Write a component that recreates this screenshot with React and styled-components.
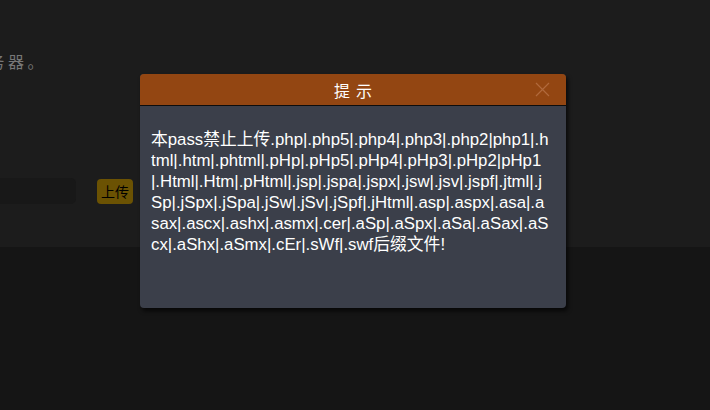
import React from 'react';
import styled, { createGlobalStyle } from 'styled-components';

const GlobalStyle = createGlobalStyle`
  html, body {
    margin: 0;
    padding: 0;
    background: #151515;
    font-family: "Liberation Sans", Arial, "Noto Sans CJK SC", sans-serif;
  }
  #root {
    min-height: 410px;
  }
`;

const Page = styled.div`
  position: relative;
  width: 710px;
  height: 410px;
  overflow: hidden;
  background: #151515;
`;

const Top = styled.div`
  height: 247px;
  background: #1c1c1c;
  display: flex;
  flex-direction: column;
  overflow: hidden;
`;

const Notice = styled.p`
  margin: 49px 0 0 -31px;
  white-space: nowrap;
  font-size: 16px;
  letter-spacing: 3.5px;
  color: #777;
  font-family: "Noto Sans CJK SC", sans-serif;
`;

const UploadRow = styled.div`
  display: flex;
  align-items: center;
  gap: 21px;
  margin-top: 105px;
`;

const FileInput = styled.div`
  width: 80px;
  height: 26px;
  margin-left: -4px;
  border-radius: 0 5px 5px 0;
  background: #181818;
`;

const UploadButton = styled.button`
  height: 25px;
  padding: 0 4px;
  border: none;
  border-radius: 4px;
  background: #6b5203;
  color: #000;
  font-size: 14px;
  font-family: "Noto Sans CJK SC", sans-serif;
  line-height: 25px;
`;

const Dialog = styled.div`
  position: absolute;
  left: 140px;
  top: 74px;
  width: 426px;
  height: 234px;
  border-radius: 4px;
  background: #3b3f4a;
  box-shadow: 2px 3px 4px rgba(0, 0, 0, 0.7);
  display: flex;
  flex-direction: column;
  overflow: hidden;
`;

const Header = styled.div`
  position: relative;
  height: 31px;
  flex: none;
  background: #934612;
  border-bottom: 1px solid #0d0d0d;
  display: flex;
  align-items: center;
  justify-content: center;
  color: #fff;
  font-size: 16px;
  letter-spacing: 6px;
  padding-left: 6px;
  font-family: "Noto Sans CJK SC", sans-serif;
`;

const Close = styled.svg`
  position: absolute;
  right: 16px;
  top: 8px;
`;

const Body = styled.div`
  padding: 23px 8px 0 11px;
  color: #fff;
  font-size: 16.8px;
  line-height: 21px;
  font-family: "Liberation Sans", Arial, "Noto Sans CJK SC", sans-serif;
`;

const Line = styled.div`
  white-space: nowrap;
`;

const lines = [
  '本pass禁止上传.php|.php5|.php4|.php3|.php2|php1|.h',
  'tml|.htm|.phtml|.pHp|.pHp5|.pHp4|.pHp3|.pHp2|pHp1',
  '|.Html|.Htm|.pHtml|.jsp|.jspa|.jspx|.jsw|.jsv|.jspf|.jtml|.j',
  'Sp|.jSpx|.jSpa|.jSw|.jSv|.jSpf|.jHtml|.asp|.aspx|.asa|.a',
  'sax|.ascx|.ashx|.asmx|.cer|.aSp|.aSpx|.aSa|.aSax|.aS',
  'cx|.aShx|.aSmx|.cEr|.sWf|.swf后缀文件!',
];

export default function App() {
  return (
    <>
      <GlobalStyle />
      <Page>
        <Top>
          <Notice>服务器。</Notice>
          <UploadRow>
            <FileInput />
            <UploadButton>上传</UploadButton>
          </UploadRow>
        </Top>
        <Dialog>
          <Header>
            提示
            <Close width="15" height="15" viewBox="0 0 15 15">
              <path d="M1 1L14 14M14 1L1 14" stroke="#b0693c" strokeWidth="1.2" fill="none" />
            </Close>
          </Header>
          <Body>
            {lines.map((l, i) => (
              <Line key={i}>{l}</Line>
            ))}
          </Body>
        </Dialog>
      </Page>
    </>
  );
}
